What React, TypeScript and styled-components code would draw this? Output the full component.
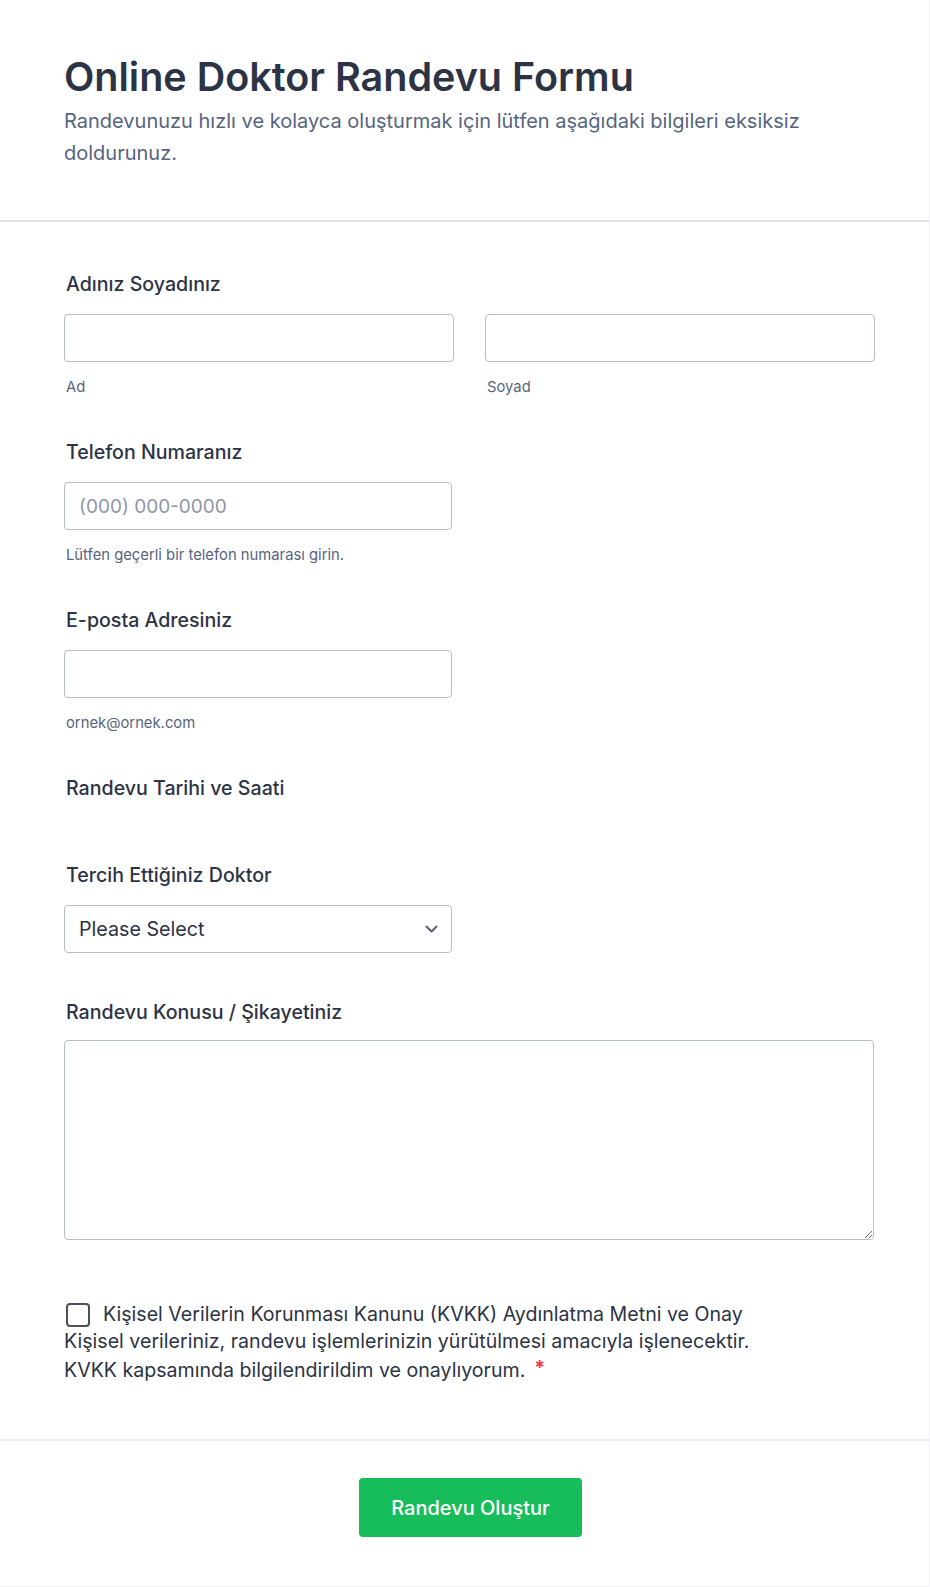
import styled, { createGlobalStyle } from 'styled-components'

const GlobalStyle = createGlobalStyle`
  * {
    box-sizing: border-box;
  }

  body {
    margin: 0;
    background: #ffffff;
    font-family: Inter, 'Noto Sans', 'Liberation Sans', sans-serif;
    color: #2c3345;
  }
`

export default function App() {
  return (
    <>
      <GlobalStyle />
      <Card>
        <Header>
          <Title>Online Doktor Randevu Formu</Title>
          <Subtitle>
            Randevunuzu hızlı ve kolayca oluşturmak için lütfen aşağıdaki bilgileri eksiksiz doldurunuz.
          </Subtitle>
        </Header>

        <Body>
          <Field>
            <Label>Adınız Soyadınız</Label>
            <NameRow>
              <div>
                <Input type="text" />
                <SubLabel>Ad</SubLabel>
              </div>
              <div>
                <Input type="text" />
                <SubLabel>Soyad</SubLabel>
              </div>
            </NameRow>
          </Field>

          <Field>
            <Label>Telefon Numaranız</Label>
            <Input type="tel" placeholder="(000) 000-0000" $half />
            <SubLabel>Lütfen geçerli bir telefon numarası girin.</SubLabel>
          </Field>

          <Field>
            <Label>E-posta Adresiniz</Label>
            <Input type="email" $half />
            <SubLabel>ornek@ornek.com</SubLabel>
          </Field>

          <Field $extra={2}>
            <Label>Randevu Tarihi ve Saati</Label>
          </Field>

          <Field $extra={4}>
            <Label>Tercih Ettiğiniz Doktor</Label>
            <SelectBox>
              Please Select
              <svg width="13" height="8" viewBox="0 0 13 8" fill="none">
                <path d="M1.5 1.5l5 5 5-5" stroke="#57647e" strokeWidth="2" strokeLinecap="round" strokeLinejoin="round" />
              </svg>
            </SelectBox>
          </Field>

          <Field>
            <Label $gap={14}>Randevu Konusu / Şikayetiniz</Label>
            <TextArea />
          </Field>
        </Body>

        <Consent>
          <CheckBox type="checkbox" />
          Kişisel Verilerin Korunması Kanunu (KVKK) Aydınlatma Metni ve Onay
          <br />
          Kişisel verileriniz, randevu işlemlerinizin yürütülmesi amacıyla işlenecektir.
          <br />
          KVKK kapsamında bilgilendirildim ve onaylıyorum.
          <Required>*</Required>
        </Consent>

        <Footer>
          <SubmitButton type="button">Randevu Oluştur</SubmitButton>
        </Footer>
      </Card>
    </>
  )
}

const Card = styled.div`
  width: 930px;
  background: #ffffff;
  border-right: 1px solid #f1f1f6;
  border-bottom: 1px solid #f1f1f6;
`

const Header = styled.header`
  padding: 54px 64px 51px;
  border-bottom: 2px solid #e3e3ea;
`

const Title = styled.h1`
  margin: 0;
  font-size: 39.5px;
  line-height: 46px;
  font-weight: 600;
  color: #2c3345;
`

const Subtitle = styled.p`
  margin: 5px 0 0;
  max-width: 780px;
  font-size: 20px;
  line-height: 32px;
  color: #57647e;
`

const Body = styled.div`
  display: flex;
  flex-direction: column;
  gap: 41px;
  padding: 48px 56px 0 64px;
`

const Field = styled.div<{ $extra?: number }>`
  display: flex;
  flex-direction: column;
  padding-bottom: ${({ $extra }) => $extra ?? 0}px;
`

const Label = styled.label<{ $gap?: number }>`
  margin: 0 0 ${({ $gap }) => $gap ?? 16}px 2px;
  font-size: 19.6px;
  line-height: 28px;
  font-weight: 500;
  color: #2c3345;
`

const NameRow = styled.div`
  display: grid;
  grid-template-columns: 390px 390px;
  gap: 31px;
`

const Input = styled.input<{ $half?: boolean }>`
  display: block;
  width: ${({ $half }) => ($half ? '388px' : '100%')};
  height: 48px;
  padding: 0 14px;
  border: 1px solid #b8bdc9;
  border-radius: 4px;
  background: #ffffff;
  font-family: inherit;
  font-size: 19px;
  color: #2c3345;

  &::placeholder {
    color: #8f96a6;
  }
`

const SubLabel = styled.div`
  margin: 15px 0 0 2px;
  font-size: 14.8px;
  line-height: 20px;
  color: #57647e;
`

const SelectBox = styled.div`
  display: flex;
  align-items: center;
  justify-content: space-between;
  width: 388px;
  height: 48px;
  padding: 0 13px 0 14px;
  border: 1px solid #b8bdc9;
  border-radius: 4px;
  font-size: 19.7px;
  color: #2c3345;
`

const TextArea = styled.textarea`
  display: block;
  width: 810px;
  height: 200px;
  padding: 10px 14px;
  border: 1px solid #b8bdc9;
  border-radius: 4px;
  font-family: inherit;
  font-size: 16px;
  resize: vertical;
`

const Consent = styled.div`
  padding: 61px 64px 55px;
  font-size: 19.6px;
  line-height: 27px;
  color: #2c3345;
`

const CheckBox = styled.input`
  appearance: none;
  display: inline-block;
  vertical-align: -6px;
  width: 24px;
  height: 24px;
  margin: 0 13px 0 2px;
  border: 2px solid #4a4f5e;
  border-radius: 4px;
  background: #ffffff;
`

const Required = styled.span`
  margin-left: 9px;
  font-weight: 700;
  color: #f23a3c;
  vertical-align: 2px;
`

const Footer = styled.footer`
  display: flex;
  justify-content: center;
  padding: 37px 0 49px 12px;
  border-top: 2px solid #ececf3;
`

const SubmitButton = styled.button`
  height: 59px;
  padding: 0 32px;
  border: none;
  border-radius: 4px;
  background: #18bd5b;
  font-family: inherit;
  font-size: 20px;
  font-weight: 500;
  color: #ffffff;
  cursor: pointer;
`
